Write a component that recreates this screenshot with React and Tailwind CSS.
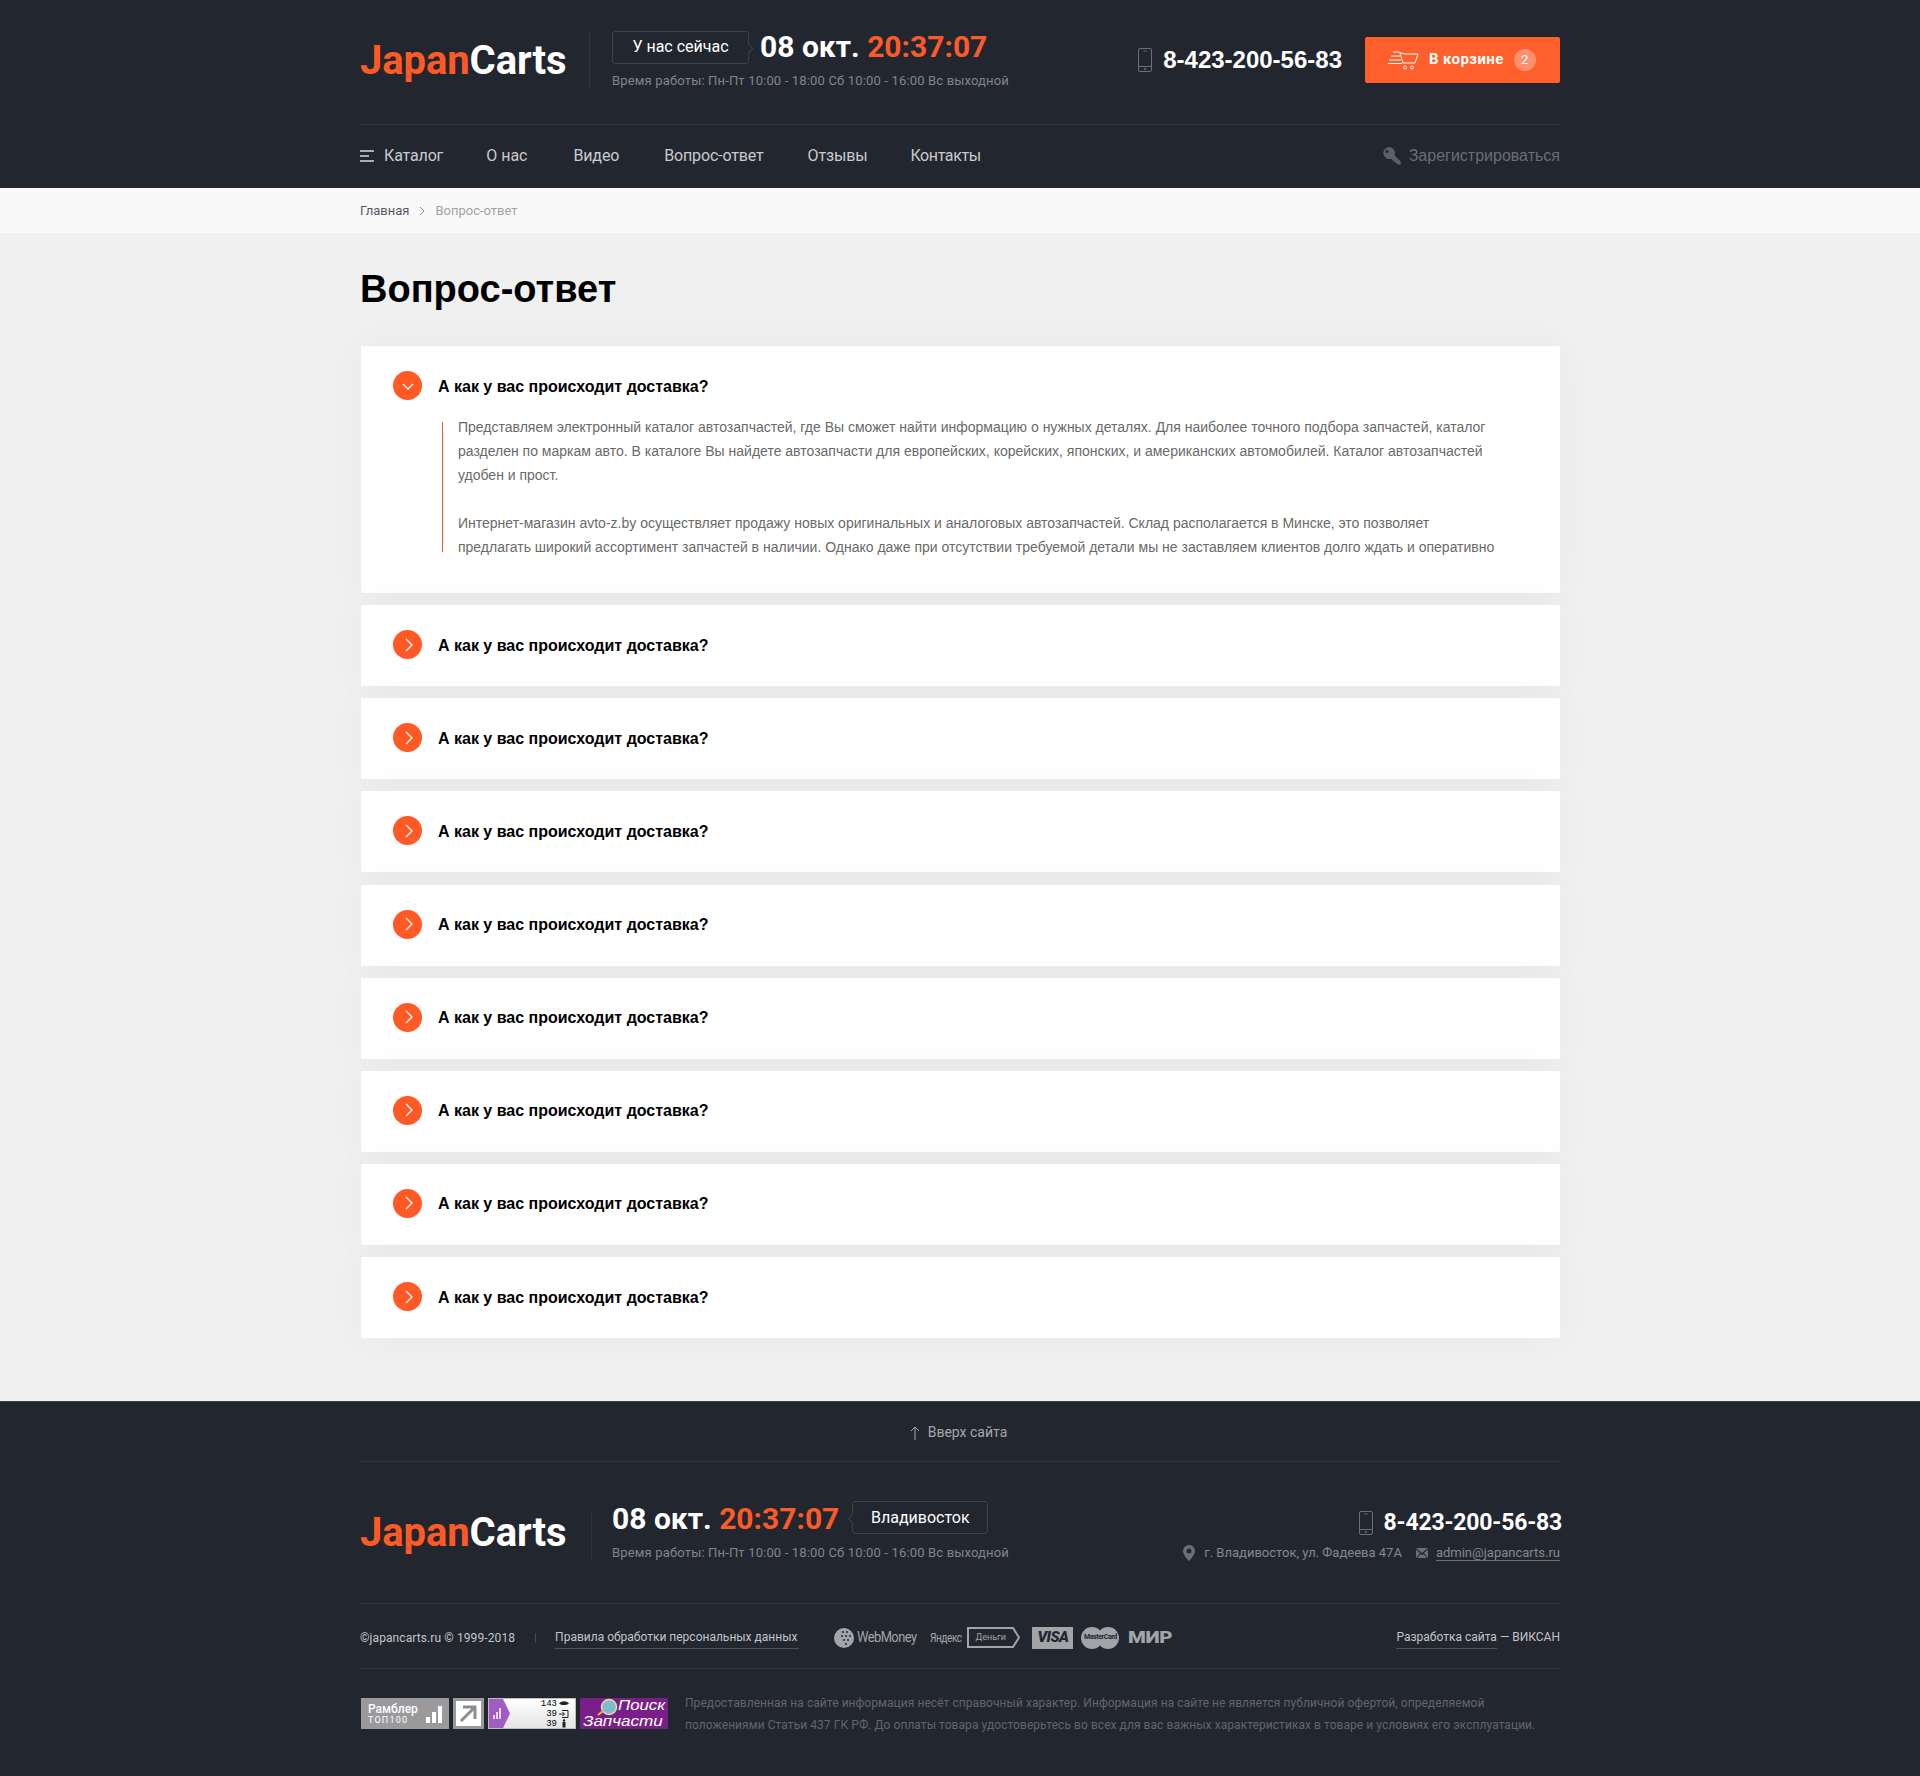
import React from 'react';

const questions = Array.from({ length: 8 });

const PhoneIcon = () => (
  <svg width="14" height="24" viewBox="0 0 14 24" fill="none" stroke="#6b6f77" strokeWidth="1">
    <rect x="0.5" y="0.5" width="13" height="23" rx="1.5" />
    <path d="M0.5 18.5h13M5.5 3h3" />
    <circle cx="7" cy="21" r="0.8" />
  </svg>
);

const CartIcon = () => (
  <svg width="31" height="20" viewBox="0 0 31 20" fill="none" stroke="#fff" strokeWidth="1">
    <path d="M11 2.5l6 1.5h13l-3 9H15l-3-10" />
    <path d="M5 2h6M3 6h9M1 10h12M0 13.5h14" />
    <circle cx="17" cy="17.5" r="1.5" />
    <circle cx="24" cy="17.5" r="1.5" />
  </svg>
);

const KeyIcon = () => (
  <svg width="18" height="18" viewBox="0 0 18 18" fill="#5c6068">
    <path d="M6 0a6 6 0 0 1 5.5 8.2l6.2 6.2v3h-2.9l-1-1.2-1.3-.1-.3-1.500-1.500-.2-2.500-2.700A6 6 0 1 1 6 0zM4 3a1.500 1.500 0 1 0 0 3 1.500 1.500 0 0 0 0-3z" />
  </svg>
);

const MenuIcon = () => (
  <svg width="14" height="12" viewBox="0 0 14 12" fill="#a9acb1">
    <rect width="14" height="2" />
    <rect y="5" width="9" height="2" />
    <rect y="10" width="14" height="2" />
  </svg>
);

const Logo = () => (
  <div className="w-[207px] font-['Roboto',sans-serif] text-[40px] leading-none font-bold tracking-[-0.1px] text-white whitespace-nowrap">
    <span className="text-[#ff5a26]">Japan</span>Carts
  </div>
);

const Clock = () => (
  <div className="font-['Roboto',sans-serif] text-[30px] leading-none font-bold text-white whitespace-nowrap">
    08 окт. <span className="text-[#ff5a26]">20:37:07</span>
  </div>
);

const Hours = () => (
  <div className="font-['Roboto',sans-serif] text-[13px] leading-none tracking-[0.16px] text-[#82858b] whitespace-nowrap">
    Время работы: Пн-Пт 10:00 - 18:00 Сб 10:00 - 16:00 Вс выходной
  </div>
);

const Question = ({ open }) => (
  <div className={`ml-px bg-white rounded-[2px] shadow-[0_0_40px_rgba(0,0,0,0.04)] pl-[32px] ${open ? 'pb-[41px]' : 'pb-[2px]'}`}>
    <div className="flex items-center gap-[16px] h-[79px]">
      <div className="w-[29px] h-[29px] rounded-full bg-[#ff5a26] flex items-center justify-center">
        <svg width="16" height="16" viewBox="0 0 16 16" fill="none" stroke="#fff" strokeWidth="1.3">
          {open ? <path d="M3 6l5 5 5-5" /> : <path d="M6 2l6 6-6 6" />}
        </svg>
      </div>
      <span className="mt-[2px] font-['Liberation_Sans',sans-serif] text-[16px] font-bold text-black">А как у вас происходит доставка?</span>
    </div>
    {open && (
      <div className="flow-root ml-[49px] -mt-[3px] h-[130px] w-[1054px] pl-[15px] border-l border-[#ff5a26]">
        <p className="font-['Liberation_Sans',sans-serif] text-[14px] leading-[24px] text-[#6a6a6a] -mt-[7px]">
          Представляем электронный каталог автозапчастей, где Вы сможет найти информацию о нужных деталях. Для наиболее точного подбора запчастей, каталог разделен по маркам авто. В каталоге Вы найдете автозапчасти для европейских, корейских, японских, и американских автомобилей. Каталог автозапчастей удобен и прост.
          <br />
          <br />
          Интернет-магазин avto-z.by осуществляет продажу новых оригинальных и аналоговых автозапчастей. Склад располагается в Минске, это позволяет предлагать широкий ассортимент запчастей в наличии. Однако даже при отсутствии требуемой детали мы не заставляем клиентов долго ждать и оперативно
        </p>
      </div>
    )}
  </div>
);

const Payments = () => (
  <div className="flex items-center text-[#a2a4a7] font-['Roboto',sans-serif]">
    <svg width="20" height="22" viewBox="0 0 20 22" fill="#a2a4a7">
      <circle cx="10" cy="11" r="10" />
      <g fill="#22262f">
        <circle cx="9" cy="5" r="1" />
        <circle cx="13" cy="5" r="1" />
        <circle cx="8" cy="9" r="1" />
        <circle cx="12" cy="9" r="1" />
        <circle cx="16" cy="9" r="1" />
        <circle cx="10" cy="13" r="1" />
        <circle cx="14" cy="13" r="1" />
        <circle cx="12" cy="17" r="1" />
      </g>
    </svg>
    <span className="ml-[3px] w-[60px] inline-block origin-left scale-x-[0.92] text-[14px] tracking-[-0.6px] whitespace-nowrap">WebMoney</span>
    <span className="ml-[13px] w-[32px] inline-block origin-left scale-x-[0.78] text-[13px] tracking-[-0.6px]">Яндекс</span>
    <div className="relative ml-[5px] w-[46px] h-[21px] flex items-center pl-[6px] text-[9px] border-2 border-r-0 border-[#a2a4a7]">
      Деньги
      <svg className="absolute -right-[7px] -top-[2px]" width="8" height="21" viewBox="0 0 8 21" fill="none" stroke="#a2a4a7" strokeWidth="2">
        <path d="M0 1h1l6 9.500-6 9.500H0" />
      </svg>
    </div>
    <div className="ml-[19px] w-[41px] h-[22px] bg-[#a2a4a7] text-[#22262f] flex items-center justify-center text-[15px] font-black italic tracking-[-0.5px]">VISA</div>
    <div className="relative ml-[8px] w-[38px] h-[22px]">
      <div className="absolute left-0 top-0 w-[22px] h-[22px] rounded-full bg-[#a2a4a7]" />
      <div className="absolute right-0 top-0 w-[22px] h-[22px] rounded-full bg-[#a2a4a7]" />
      <div className="absolute inset-0 flex items-center justify-center text-[7px] font-bold tracking-[-0.4px] text-[#22262f]">MasterCard</div>
    </div>
    <span className="ml-[9px] w-[44px] inline-block origin-left scale-x-[1.2] text-[17px] leading-none font-black tracking-[-0.3px]">МИР</span>
  </div>
);

const Badges = () => (
  <div className="ml-px flex gap-[4px] shrink-0">
    <div className="relative w-[88px] h-[31px] bg-[#9a9a9c] text-white font-['Roboto',sans-serif] pl-[7px] pt-[4px]">
      <div className="text-[12px] leading-[14px] font-medium">Рамблер</div>
      <div className="text-[9px] leading-[9px] tracking-[1.2px]">ТОП100</div>
      <svg className="absolute right-[6px] top-[8px]" width="17" height="17" viewBox="0 0 17 17" fill="#fff">
        <rect y="11" width="4" height="6" />
        <rect x="6" y="6" width="4" height="11" />
        <rect x="12" y="0" width="4" height="17" />
      </svg>
    </div>
    <div className="w-[31px] h-[31px] bg-[#9a9a9c] p-[3px]">
      <div className="w-full h-full bg-white flex items-center justify-center">
        <svg width="19" height="19" viewBox="0 0 19 19" fill="none" stroke="#8c8c8e" strokeWidth="3">
          <path d="M2 17L16 3M4 3h12v12" />
        </svg>
      </div>
    </div>
    <div className="relative w-[88px] h-[31px] bg-gradient-to-b from-white to-[#e4e4e4] border border-[#bdbdbd] overflow-hidden">
      <svg className="absolute left-0 top-0" width="21" height="29" viewBox="0 0 21 29">
        <path d="M0 0h14l7 14.500-7 14.500H0z" fill="#a05cc4" />
        <path d="M4 20h2v-4H4zM7 20h2v-7H7zM10 20h2V9h-2z" fill="#e8d8f0" />
      </svg>
      <div className="absolute right-[18px] top-0 text-right font-['Liberation_Mono',monospace] text-[9px] leading-[10px] text-black">
        <div>143</div>
        <div>39</div>
        <div>39</div>
      </div>
      <svg className="absolute right-[6px] top-0" width="10" height="29" viewBox="0 0 10 29" fill="#222">
        <path d="M0 4.500C3 1.500 7 1.500 10 4.500 7 6.500 3 6.500 0 4.500z" />
        <path d="M3 11.500h6v7H3M0 15h5M3.500 13l2 2-2 2" fill="none" stroke="#222" />
        <circle cx="5" cy="21.500" r="1.200" />
        <rect x="3.500" y="23" width="3" height="5.500" />
      </svg>
    </div>
    <div className="relative w-[88px] h-[31px] bg-[#7a1f87] text-white font-['Liberation_Sans',sans-serif] italic">
      <div className="absolute left-[38px] top-0 origin-left scale-x-[1.2] text-[14px] leading-[15px]">Поиск</div>
      <div className="absolute left-[3px] top-[16px] origin-left scale-x-[1.22] text-[14px] leading-[15px] whitespace-nowrap">Запчасти</div>
      <svg className="absolute left-[16px] top-0" width="22" height="18" viewBox="0 0 22 18">
        <circle cx="13" cy="9" r="7.500" fill="#7dbbd0" stroke="#ecd9a0" strokeWidth="1.500" />
        <path d="M7 13l-5 4" stroke="#e8b030" strokeWidth="2" />
      </svg>
    </div>
  </div>
);

export default function App() {
  return (
    <div className="bg-[#f0f0f0] font-['Roboto',sans-serif]">
      <header className="bg-[#22262f] h-[188px]">
        <div className="w-[1200px] mx-auto">
          <div className="h-[125px] flex items-center border-b border-[#30343c] pb-[4px]">
            <div className="mt-[1px]"><Logo /></div>
            <div className="ml-[22px] -mt-[2px] w-px h-[58px] bg-[#30343c]" />
            <div className="ml-[22px] -mt-[3px]">
              <div className="flex items-center gap-[11px]">
                <div className="relative h-[33px] w-[137px] border border-[#3c4048] rounded-[3px] flex items-center justify-center text-[16px] text-white">
                  У нас сейчас
                  <div className="absolute -right-[4px] top-[13px] w-[7px] h-[7px] rotate-45 bg-[#22262f] border-t border-r border-[#3c4048]" />
                </div>
                <Clock />
              </div>
              <div className="mt-[10px]"><Hours /></div>
            </div>
            <div className="ml-auto flex items-center">
              <PhoneIcon />
              <span className="ml-[11px] font-['Liberation_Sans',sans-serif] text-[24px] font-bold text-white">8-423-200-56-83</span>
              <div className="ml-[23px] w-[195px] h-[46px] bg-[#ff5f2b] rounded-[2px] flex items-center pl-[23px]">
                <CartIcon />
                <span className="ml-[10px] -mt-[2px] text-[15px] font-bold tracking-[0.4px] text-white">В корзине</span>
                <span className="ml-[10px] w-[22px] h-[22px] rounded-full bg-[#ff8f6e] flex items-center justify-center text-[13px] text-white">2</span>
              </div>
            </div>
          </div>
          <nav className="h-[63px] pb-[2px] flex items-center text-[16px] tracking-[-0.15px] text-[#c9cbce]">
            <MenuIcon />
            <span className="ml-[10px]">Каталог</span>
            <span className="ml-[43px] tracking-normal">О нас</span>
            <span className="ml-[46px]">Видео</span>
            <span className="ml-[45px]">Вопрос-ответ</span>
            <span className="ml-[44px]">Отзывы</span>
            <span className="ml-[43px] tracking-[-0.4px]">Контакты</span>
            <div className="ml-auto flex items-center gap-[8px] tracking-normal text-[#6a6e75] font-['Liberation_Sans',sans-serif]">
              <KeyIcon />
              Зарегистрироваться
            </div>
          </nav>
        </div>
      </header>

      <div className="bg-[#f9f9f9] h-[45px]">
        <div className="w-[1200px] mx-auto h-full flex items-center pt-[1px] text-[13px]">
          <span className="text-[#55585e]">Главная</span>
          <svg className="mx-[8px]" width="10" height="10" viewBox="0 0 10 10" fill="none" stroke="#8a8a8a" strokeWidth="1">
            <path d="M3 1l4 4-4 4" />
          </svg>
          <span className="text-[#a3a3a3]">Вопрос-ответ</span>
        </div>
      </div>

      <main className="w-[1200px] mx-auto h-[1168px] pt-[33px]">
        <h1 className="font-['Liberation_Sans',sans-serif] text-[38px] leading-[46px] font-bold text-black">Вопрос-ответ</h1>
        <div className="mt-[34px] flex flex-col gap-[12.15px]">
          <Question open />
          {questions.map((_, i) => <Question key={i} />)}
        </div>
      </main>

      <footer className="bg-[#22262f] h-[375px] border-t border-[#3a3e46]">
        <div className="w-[1200px] mx-auto">
          <div className="h-[60px] pt-[2px] pr-[3px] flex items-center justify-center gap-[8px] text-[14px] text-[#a6a8ac] border-b border-[#30343c]">
            <svg width="10" height="14" viewBox="0 0 10 14" fill="none" stroke="#a6a8ac" strokeWidth="1">
              <path d="M5 14V1M1 5l4-4 4 4" />
            </svg>
            Вверх сайта
          </div>
          <div className="h-[142px] flex items-center border-b border-[#30343c]">
            <Logo />
            <div className="ml-[24px] mt-[6px] w-px h-[49px] bg-[#30343c]" />
            <div className="ml-[20px] mb-[5px]">
              <div className="flex items-center gap-[13px]">
                <div className="pt-[2px]"><Clock /></div>
                <div className="relative h-[33px] w-[136px] border border-[#3c4048] rounded-[3px] flex items-center justify-center text-[16px] text-white">
                  Владивосток
                  <div className="absolute -left-[4px] top-[13px] w-[7px] h-[7px] rotate-45 bg-[#22262f] border-b border-l border-[#3c4048]" />
                </div>
              </div>
              <div className="mt-[12px]"><Hours /></div>
            </div>
            <div className="ml-auto mt-[5px] flex flex-col items-end">
              <div className="flex items-center -mr-[2px]">
                <PhoneIcon />
                <span className="ml-[11px] text-[23px] leading-[28px] font-bold tracking-[-0.2px] text-white">8-423-200-56-83</span>
              </div>
              <div className="mt-[8px] flex items-center text-[13px] leading-[16px] text-[#85888d]">
                <svg width="12" height="16" viewBox="0 0 12 16" fill="#6c6f75">
                  <path d="M6 0a6 6 0 0 1 6 6c0 4-6 10-6 10S0 10 0 6a6 6 0 0 1 6-6zm0 3.500a2.500 2.500 0 1 0 0 5 2.500 2.500 0 0 0 0-5z" />
                </svg>
                <span className="ml-[9px]">г. Владивосток, ул. Фадеева 47А</span>
                <svg className="ml-[14px]" width="12" height="10" viewBox="0 0 12 10" fill="#6c6f75">
                  <path d="M0 0h12L6 5zM0 1.500V10l4-5zM12 1.500V10L8 5zM1 10h10L7.500 6 6 7 4.500 6z" />
                </svg>
                <span className="ml-[8px] border-b border-[#6c6f75] leading-[14px]">admin@japancarts.ru</span>
              </div>
            </div>
          </div>
          <div className="h-[65px] pt-[3px] flex items-center text-[12px] text-[#c3c5c8] border-b border-[#30343c]">
            <span className="tracking-[0.1px]">©japancarts.ru © 1999-2018</span>
            <div className="ml-[20px] w-px h-[10px] bg-[#444850]" />
            <span className="ml-[19px] pr-[2px] border-b border-[#4c5058] leading-[22px]">Правила обработки персональных данных</span>
            <div className="ml-[35px]"><Payments /></div>
            <div className="ml-auto">
              <span className="inline-block border-b border-[#4c5058] leading-[22px]">Разработка сайта</span> — ВИКСАН
            </div>
          </div>
          <div className="pt-[29px] flex gap-[17px]">
            <Badges />
            <p className="text-[12px] leading-[22px] tracking-[0.06px] text-[#62656b] -mt-[6px] whitespace-nowrap">
              Предоставленная на сайте информация несёт справочный характер. Информация на сайте не является публичной офертой, определяемой
              <br />
              положениями Статьи 437 ГК РФ. До оплаты товара удостоверьтесь во всех для вас важных характеристиках в товаре и условиях его эксплуатации.
            </p>
          </div>
        </div>
      </footer>
    </div>
  );
}
